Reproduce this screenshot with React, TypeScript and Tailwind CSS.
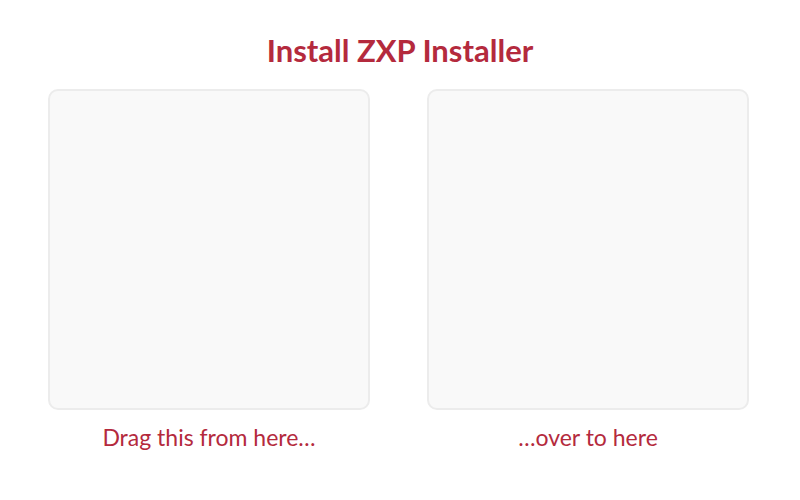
export default function App() {
  return (
    <div className="w-[800px] h-[500px] bg-white flex flex-col items-center" style={{ fontFamily: 'Lato, "Open Sans", sans-serif' }}>
      <h1 className="mt-[30px] h-[40px] leading-[40px] text-[31px] font-bold text-[#b42a3d]">Install ZXP Installer</h1>
      <div className="mt-[19px] w-full pl-[48px] flex gap-[57px]">
        {["Drag this from here…", "…over to here"].map((t) => (
          <div key={t} className="flex flex-col items-center">
            <div className="w-[322px] h-[321px] rounded-[10px] border-2 border-[#ececec] bg-[#f9f9f9]" />
            <div className="mt-[13px] h-[28px] leading-[28px] text-[23px] text-[#b42a3d]">{t}</div>
          </div>
        ))}
      </div>
    </div>
  );
}
